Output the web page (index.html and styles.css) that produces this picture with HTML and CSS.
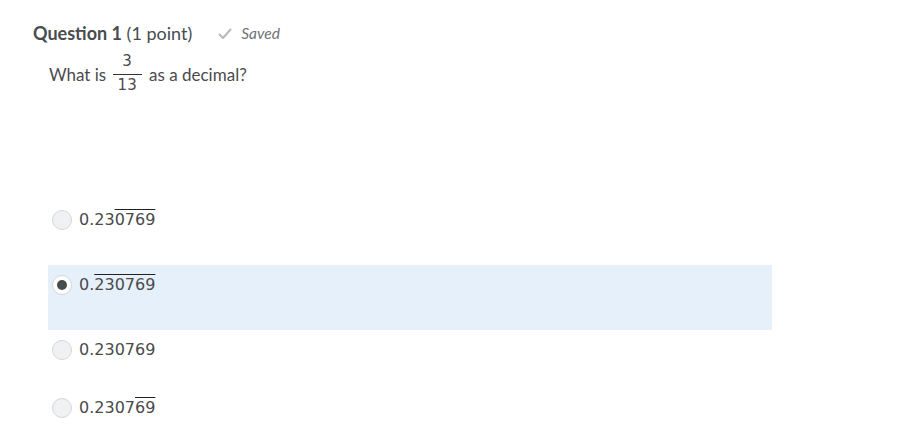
FILE: index.html
```html
<!DOCTYPE html>
<html>
<head>
<meta charset="utf-8">
<link rel="stylesheet" href="styles.css">
</head>
<body>
<div class="page">
  <div class="qhead">
    <span class="qtitle"><b>Question 1</b> (1 point)</span>
    <span class="saved">
      <svg class="check" width="14" height="12" viewBox="0 0 14 12"><path d="M1.5 6.5 L5 10 L12.5 1.5" fill="none" stroke="#b4b9bd" stroke-width="2" stroke-linecap="round" stroke-linejoin="round"/></svg>
      <span class="saved-text">Saved</span>
    </span>
  </div>
  <div class="qtext">What is <span class="frac"><span class="num">3</span><span class="den">13</span></span> as a decimal?</div>
  <div class="options">
    <div class="opt opt1"><span class="radio"></span><span class="val">0.23<span class="ol">0769</span></span></div>
    <div class="opt opt2 selected"><span class="radio on"></span><span class="val">0.<span class="ol">230769</span></span></div>
    <div class="opt opt3"><span class="radio"></span><span class="val">0.230769</span></div>
    <div class="opt opt4"><span class="radio"></span><span class="val">0.2307<span class="ol">69</span></span></div>
  </div>
</div>
</body>
</html>
```
FILE: styles.css
```css
html, body { margin: 0; padding: 0; background: #fff; }
body { font-family: Lato, "Open Sans", sans-serif; color: #494c4e; }
.page { width: 912px; height: 448px; overflow: hidden; }
.qhead { display: flex; align-items: center; padding: 21px 0 0 33px; height: 24px; }
.qtitle { font-size: 18px; line-height: 24px; }
.qtitle b { font-weight: 700; }
.saved { display: flex; align-items: center; margin-left: 26px; color: #6e7376; }
.check { margin-right: 9px; margin-top: 1px; }
.saved-text { font-style: italic; font-size: 15.5px; }
.qtext { padding: 8px 0 0 49px; font-size: 17px; line-height: 30px; }
.frac { display: inline-flex; flex-direction: column; align-items: center; vertical-align: 15px; margin: 0 3px 0 2px; font-family: "DejaVu Sans", sans-serif; font-size: 15px; line-height: 17px; color: #4a4a4a; }
.num { padding: 0 5px 4px; }
.den { border-top: 1px solid #333; padding: 2px 5px 0; }
.options { margin: 106px 0 0 48px; width: 724px; }
.opt { display: flex; align-items: flex-start; padding: 10px 0 0 4px; box-sizing: border-box; }
.opt1 { height: 65px; }
.opt2 { height: 65px; }
.opt3 { height: 58px; }
.opt4 { height: 50px; }
.selected { background: #e6f0fa; }
.radio { width: 18px; height: 18px; border: 1px solid #d3d7db; border-radius: 50%; background: #f0f1f3; box-sizing: content-box; display: flex; align-items: center; justify-content: center; flex: none; }
.radio.on { background: #fff; }
.radio.on::after { content: ""; width: 10px; height: 10px; border-radius: 50%; background: #494c4e; }
.val { margin-left: 7px; font-family: "DejaVu Sans", sans-serif; font-size: 16px; line-height: 20px; color: #4a4a4a; }
.ol { text-decoration: overline; text-decoration-thickness: 1px; text-decoration-color: #222; }
```
